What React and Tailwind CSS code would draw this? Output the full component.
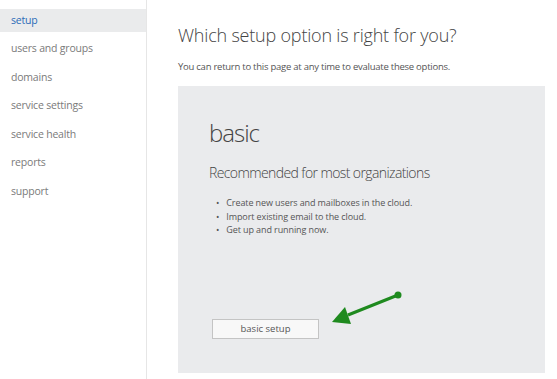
export default function App() {
  const items = ["setup", "users and groups", "domains", "service settings", "service health", "reports", "support"];
  return (
    <div className="flex h-[379px] w-[557px] bg-white overflow-hidden" style={{ fontFamily: '"Open Sans", "Noto Sans", sans-serif' }}>
      <div className="w-[147px] shrink-0 border-r border-[#e6e6e6] pt-[9px]">
        {items.map((it, i) => (
          <div
            key={it}
            className={
              "h-[23px] mb-[5.5px] pl-[11px] flex items-center text-[10.5px] tracking-[-0.2px] " +
              (i === 0 ? "bg-[#eaebec] text-[#2b6cb8]" : "text-[#7a7a7a]")
            }
          >
            {it}
          </div>
        ))}
      </div>
      <div className="flex-1 pl-[31px] pt-[22px]">
        <div className="text-[18px] font-light tracking-[-0.2px] text-[#444] leading-[26px]">Which setup option is right for you?</div>
        <div className="mt-[12px] text-[9.5px] tracking-[-0.25px] text-[#555] leading-[14px]">You can return to this page at any time to evaluate these options.</div>
        <div className="relative mt-[12px] w-[367px] h-[287px] bg-[#eaebed] pl-[31px] pt-[32px]">
          <div className="text-[24px] font-light tracking-[-1px] text-[#444] leading-[30px]">basic</div>
          <div className="mt-[16px] text-[14px] font-light tracking-[-0.6px] text-[#444] leading-[18px]">Recommended for most organizations</div>
          <ul className="mt-[14px] pl-[7px] text-[9px] tracking-[-0.1px] text-[#555] leading-[13.5px]">
            <li className="flex gap-[7px]"><span>•</span><span>Create new users and mailboxes in the cloud.</span></li>
            <li className="flex gap-[7px]"><span>•</span><span>Import existing email to the cloud.</span></li>
            <li className="flex gap-[7px]"><span>•</span><span>Get up and running now.</span></li>
          </ul>
          <button className="absolute left-[34px] top-[233px] w-[107px] h-[20px] border border-[#c4c4c4] bg-[#f8f8f8] text-[9.5px] text-[#555] flex items-center justify-center">
            basic setup
          </button>
          <svg className="absolute left-0 top-0" width="367" height="287" viewBox="0 0 367 287">
            <line x1="220" y1="209" x2="170" y2="229" stroke="#1f8a1f" strokeWidth="3" />
            <circle cx="220" cy="209" r="3.5" fill="#1f8a1f" />
            <polygon points="154,236 167,221 173,238" fill="#1f8a1f" />
          </svg>
        </div>
      </div>
    </div>
  );
}
